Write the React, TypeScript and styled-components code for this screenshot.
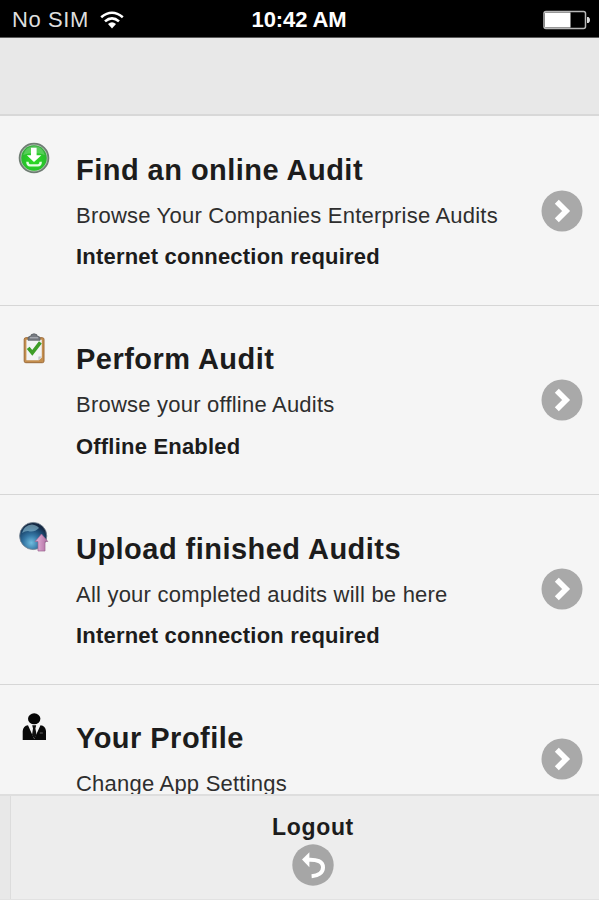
import React from "react";
import styled, { createGlobalStyle } from "styled-components";

const GlobalStyle = createGlobalStyle`
  * { box-sizing: border-box; }
  body { margin: 0; background: #f5f5f5; }
`;

const Screen = styled.div`
  width: 599px;
  height: 900px;
  display: flex;
  flex-direction: column;
  overflow: hidden;
  background: #f5f5f5;
  color: #1c1c1c;
  font-family: "Liberation Sans", Arial, sans-serif;
`;

const StatusBar = styled.div`
  flex: none;
  height: 38px;
  padding: 1px 9px 0 12px;
  display: grid;
  grid-template-columns: 1fr auto 1fr;
  align-items: center;
  background: #000;
  border-bottom: 1px solid #5c5c5c;
  color: #fff;
  font-size: 22px;
  line-height: 38px;
`;

const Carrier = styled.div`
  display: flex;
  align-items: center;
  gap: 11px;
  color: #dedede;
  letter-spacing: 0.6px;
`;

const Clock = styled.div`
  font-weight: 700;
  font-size: 22px;
  letter-spacing: -0.12px;
  margin-right: 4px;
`;

const BatteryIcon = styled.svg`
  justify-self: end;
`;

const Header = styled.div`
  flex: none;
  height: 78.4px;
  background: #e8e8e8;
  border-bottom: 2px solid #d8d8d8;
`;

const List = styled.div`
  flex: 1;
  min-height: 0;
  overflow: hidden;
`;

const Row = styled.div<{ $short?: boolean }>`
  height: ${(p) => (p.$short ? 149 : 189.4)}px;
  display: flex;
  align-items: center;
  padding: 0 16px 0 18px;
  border-bottom: 1px solid #d6d6d6;
`;

const IconSlot = styled.div`
  align-self: flex-start;
  width: 58px;
  padding-top: 26px;
  line-height: 0;
`;

const Copy = styled.div`
  flex: 1;
  align-self: flex-start;
  padding-top: 33.7px;
  white-space: nowrap;
`;

const Title = styled.div`
  font-size: 29px;
  font-weight: 700;
  line-height: 40px;
  margin-bottom: 5px;
  letter-spacing: 0.47px;
`;

const Detail = styled.div<{ $strong?: boolean }>`
  font-size: 22px;
  line-height: 41.4px;
  font-weight: ${(p) => (p.$strong ? 700 : 400)};
  color: ${(p) => (p.$strong ? "#1c1c1c" : "#2e2e2e")};
  letter-spacing: ${(p) => (p.$strong ? 0.2 : 0.22)}px;
`;

const Footer = styled.div`
  flex: none;
  height: 106.4px;
  display: flex;
  background: #e8e8e8;
  border-top: 2px solid #dedede;
  border-bottom: 1px solid #e2e2e2;
`;

const LogoutButton = styled.div`
  flex: 1;
  margin-left: 10px;
  padding: 16px 0 0 16px;
  display: flex;
  flex-direction: column;
  align-items: center;
  gap: 2.5px;
  background: #ededed;
  border-left: 1px solid #dcdcdc;
  font-size: 23px;
  font-weight: 700;
  line-height: 30px;
  letter-spacing: 0.65px;
`;

const Wifi = () => (
  <svg width="24" height="18" viewBox="0 0 24 18" fill="none" stroke="#fff" strokeWidth="2.6">
    <path d="M1.2 6.3Q12-2.8 22.8 6.3" />
    <path d="M5 10.4Q12 4.2 19 10.4" />
    <path d="M8 13.1Q12 9.3 16 13.1L12 17.4Z" fill="#fff" stroke="none" />
  </svg>
);

const Battery = () => (
  <BatteryIcon width="47" height="20" viewBox="0 0 47 20">
    <rect x="1" y="1.5" width="41.5" height="17" rx="2" fill="none" stroke="#b8b8b8" strokeWidth="1.5" />
    <rect x="2" y="2.5" width="25.5" height="15" fill="#fff" />
    <path d="M44 7h1.5q1.5 1 1.5 3t-1.5 3H44z" fill="#ddd" />
  </BatteryIcon>
);

const Chevron = () => (
  <svg width="42" height="42" viewBox="0 0 42 42">
    <circle cx="21" cy="21" r="20.5" fill="#a9a9a9" />
    <path d="M15.8 11.8L25.1 21L15.8 30.2" fill="none" stroke="#fff" strokeWidth="5.6" />
  </svg>
);

const Back = () => (
  <svg width="42" height="42" viewBox="0 0 42 42">
    <circle cx="21" cy="21" r="20.7" fill="#a6a6a6" />
    <path d="M10 15.5L17.4 8.2V23.2Z" fill="#fff" />
    <path d="M16 15.7C25 15.2 31 17.5 31 23.4C31 28.5 26 31.7 19.6 32.2" fill="none" stroke="#fff" strokeWidth="4" />
  </svg>
);

const Download = () => (
  <svg width="32" height="32" viewBox="0 0 32 32">
    <defs>
      <radialGradient id="green" cx="50%" cy="60%" r="55%">
        <stop offset="0" stopColor="#2fdc24" />
        <stop offset=".7" stopColor="#27c529" />
        <stop offset="1" stopColor="#35ad3d" />
      </radialGradient>
    </defs>
    <circle cx="16" cy="16" r="14.4" fill="#b9cbb9" stroke="#6f7d73" strokeWidth="1.8" />
    <circle cx="16" cy="16" r="12.8" fill="url(#green)" />
    <path d="M5.2 13Q7.5 4.5 16 4.2T26.8 13Q16 9 5.2 13Z" fill="#8be58b" opacity=".45" />
    <path d="M13 5.8h5.6v7.4h4.8L16 20L8.8 13.2H13z" fill="#fff" />
    <path d="M9.4 19.8Q9.5 23.4 12 23.4H20Q22.6 23.4 22.7 19.8" fill="none" stroke="#e5ffe3" strokeWidth="2.4" />
  </svg>
);

const Clipboard = () => (
  <svg width="32" height="32" viewBox="0 0 32 32">
    <rect x="6.2" y="5.7" width="19.8" height="25" rx="1.6" fill="#c58f4e" stroke="#9c6b39" />
    <path d="M8.4 7.8H23.8V25.4L20.8 28.2H8.4Z" fill="#f2f3f5" />
    <path d="M23.8 24.6H20.4V28.2Z" fill="#bfc2cb" />
    <path d="M10 6.2Q10 4.2 13 4V2.8Q16 .6 19 2.8V4Q22 4.2 22 6.2V8.3H10Z" fill="#777b82" stroke="#565b60" strokeWidth=".7" />
    <path d="M12 5.8h8" stroke="#b9bdc2" />
    <path d="M10.2 15.8L14.3 20.8L22.4 10.4" fill="none" stroke="#3d9d28" strokeWidth="3.6" />
  </svg>
);

const Globe = () => (
  <svg width="32" height="32" viewBox="0 0 32 32">
    <defs>
      <radialGradient id="globe" cx="43%" cy="75%" r="66%">
        <stop offset="0" stopColor="#70bddf" />
        <stop offset=".43" stopColor="#3476a4" />
        <stop offset=".8" stopColor="#1a456c" />
        <stop offset="1" stopColor="#152944" />
      </radialGradient>
      <linearGradient id="arrow" x1="0" y1="0" x2="1" y2="0">
        <stop offset="0" stopColor="#e9b7dd" />
        <stop offset="1" stopColor="#ad6b9f" />
      </linearGradient>
    </defs>
    <circle cx="15.2" cy="15" r="13.6" fill="url(#globe)" stroke="#76818e" strokeWidth=".8" />
    <path d="M4 12Q6 4 14 3.5Q19 4 21 7Q16 12 10 10Q7 10 4 12Z" fill="#9accdf" opacity=".55" />
    <path d="M23.5 13L29.8 20.5H27V30H20V20.5H17.2Z" fill="url(#arrow)" stroke="#9b668f" strokeWidth=".7" />
  </svg>
);

const Person = () => (
  <svg width="32" height="32" viewBox="0 0 32 32">
    <ellipse cx="16.2" cy="7.8" rx="6.2" ry="5.5" fill="#060606" />
    <path d="M10 14.2Q5.2 14.6 4.7 20V29H28V20Q27.5 14.6 22.5 14.2L16.2 28Z" fill="#090909" />
    <path d="M11.2 14.2L16.3 28L21.2 14.2Z" fill="#f5f5f5" />
    <path d="M14.2 14.3h4l-.8 3.1l1.2 6.5L16.3 28L14 23.9l1-6.5z" fill="#111" />
    <path d="M21.8 22h3" stroke="#666" strokeWidth="1" />
  </svg>
);

const items = [
  { title: "Find an online Audit", detail: "Browse Your Companies Enterprise Audits", note: "Internet connection required", icon: <Download /> },
  { title: "Perform Audit", detail: "Browse your offline Audits", note: "Offline Enabled", icon: <Clipboard /> },
  { title: "Upload finished Audits", detail: "All your completed audits will be here", note: "Internet connection required", icon: <Globe /> },
  { title: "Your Profile", detail: "Change App Settings", icon: <Person /> },
];

export default function App() {
  return (
    <>
      <GlobalStyle />
      <Screen>
        <StatusBar>
          <Carrier>No SIM <Wifi /></Carrier>
          <Clock>10:42 AM</Clock>
          <Battery />
        </StatusBar>
        <Header />
        <List>
          {items.map((item) => (
            <Row key={item.title} $short={!item.note}>
              <IconSlot>{item.icon}</IconSlot>
              <Copy>
                <Title>{item.title}</Title>
                <Detail>{item.detail}</Detail>
                {item.note && <Detail $strong>{item.note}</Detail>}
              </Copy>
              <Chevron />
            </Row>
          ))}
        </List>
        <Footer>
          <LogoutButton>
            <span>Logout</span>
            <Back />
          </LogoutButton>
        </Footer>
      </Screen>
    </>
  );
}
